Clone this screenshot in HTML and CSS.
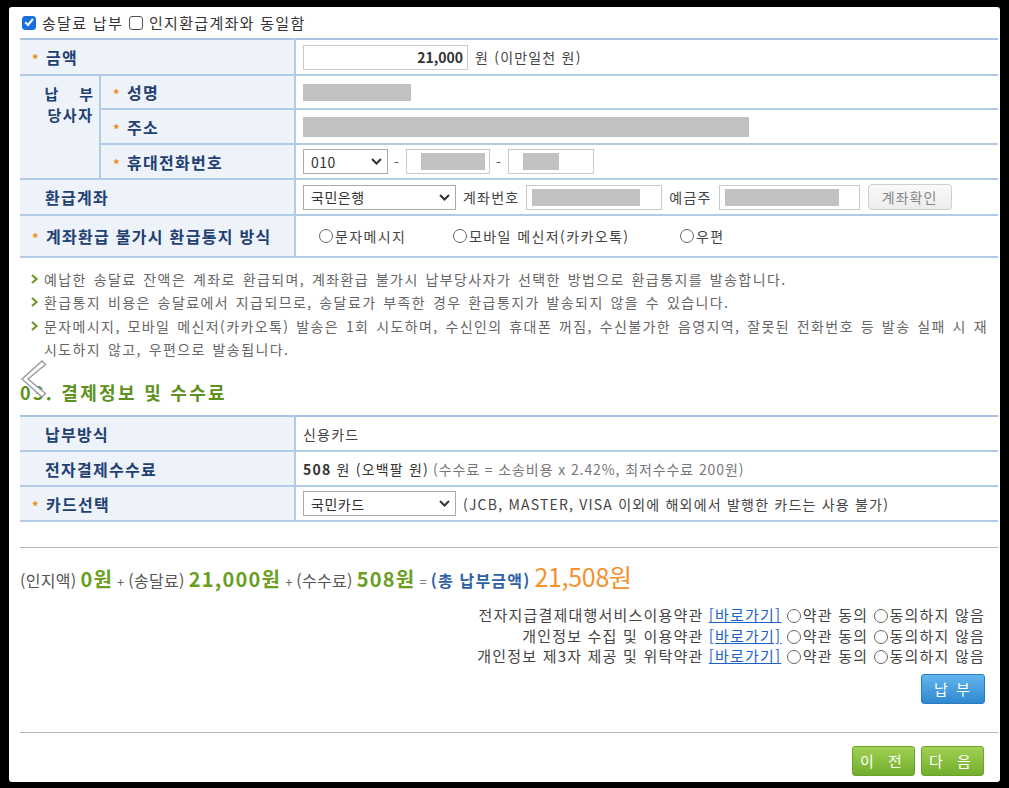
FILE: index.html
```html
<!DOCTYPE html>
<html lang="ko">
<head>
    <meta charset="utf-8">
    <title>송달료 납부</title>
    <link rel="stylesheet" href="styles.css">
</head>
<body>
    <div class="panel">
        <div class="opts">
            <span class="chk on"><svg width="14" height="14" viewBox="0 0 14 14"><path d="M3.2 7.2 L6 10 L11 4" fill="none" stroke="#fff" stroke-width="2"/></svg></span>
            <span>송달료 납부</span>
            <span class="chk"></span>
            <span>인지환급계좌와 동일함</span>
        </div>

        <table class="form-table">
            <colgroup><col class="c1"><col class="c2"><col></colgroup>
            <tr class="h36">
                <th colspan="2" class="req">금액</th>
                <td><div class="val"><span class="inp amt">21,000</span><span>원 (이만일천 원)</span></div></td>
            </tr>
            <tr class="h34">
                <th rowspan="3" class="party"><div class="party-top"><span>납</span><span>부</span></div><div>당사자</div></th>
                <th class="req sub">성명</th>
                <td><div class="val"><span class="mask m-name"></span></div></td>
            </tr>
            <tr class="h35">
                <th class="req sub">주소</th>
                <td><div class="val"><span class="mask m-addr"></span></div></td>
            </tr>
            <tr class="h35">
                <th class="req sub">휴대전화번호</th>
                <td>
                    <div class="val phone">
                        <span class="sel s-phone">010<svg width="11" height="7" viewBox="0 0 11 7"><path d="M1 1 L5.5 5.5 L10 1" fill="none" stroke="#333" stroke-width="2"/></svg></span>
                        <span class="dash">-</span>
                        <span class="inp i-ph1"><span class="mask m-ph1"></span></span>
                        <span class="dash">-</span>
                        <span class="inp i-ph2"><span class="mask m-ph2"></span></span>
                    </div>
                </td>
            </tr>
            <tr class="h36">
                <th colspan="2">환급계좌</th>
                <td>
                    <div class="val">
                        <span class="sel s-bank">국민은행<svg width="11" height="7" viewBox="0 0 11 7"><path d="M1 1 L5.5 5.5 L10 1" fill="none" stroke="#333" stroke-width="2"/></svg></span>
                        <span>계좌번호</span>
                        <span class="inp i-acc"><span class="mask m-acc"></span></span>
                        <span>예금주</span>
                        <span class="inp i-own"><span class="mask m-own"></span></span>
                        <span class="btn-gray">계좌확인</span>
                    </div>
                </td>
            </tr>
            <tr class="h42">
                <th colspan="2" class="req">계좌환급 불가시 환급통지 방식</th>
                <td>
                    <div class="val radios">
                        <span class="ropt o1"><span class="radio"></span>문자메시지</span>
                        <span class="ropt o2"><span class="radio"></span>모바일 메신저(카카오톡)</span>
                        <span class="ropt"><span class="radio"></span>우편</span>
                    </div>
                </td>
            </tr>
        </table>

        <ul class="notes">
            <li><span class="arr"><svg width="7" height="10" viewBox="0 0 7 10"><path d="M1 1 L5.5 5 L1 9" fill="none" stroke="#6f9b2c" stroke-width="2.2"/></svg></span><span>예납한 송달료 잔액은 계좌로 환급되며, 계좌환급 불가시 납부당사자가 선택한 방법으로 환급통지를 발송합니다.</span></li>
            <li><span class="arr"><svg width="7" height="10" viewBox="0 0 7 10"><path d="M1 1 L5.5 5 L1 9" fill="none" stroke="#6f9b2c" stroke-width="2.2"/></svg></span><span>환급통지 비용은 송달료에서 지급되므로, 송달료가 부족한 경우 환급통지가 발송되지 않을 수 있습니다.</span></li>
            <li><span class="arr"><svg width="7" height="10" viewBox="0 0 7 10"><path d="M1 1 L5.5 5 L1 9" fill="none" stroke="#6f9b2c" stroke-width="2.2"/></svg></span><span>문자메시지, 모바일 메신저(카카오톡) 발송은 1회 시도하며, 수신인의 휴대폰 꺼짐, 수신불가한 음영지역, 잘못된 전화번호 등 발송 실패 시 재<br>시도하지 않고, 우편으로 발송됩니다.</span></li>
        </ul>

        <h3 class="sec-title">03. 결제정보 및 수수료</h3>

        <table class="form-table pay">
            <colgroup><col class="c1"><col class="c2"><col></colgroup>
            <tr class="h35">
                <th colspan="2">납부방식</th>
                <td><div class="val">신용카드</div></td>
            </tr>
            <tr class="h35">
                <th colspan="2">전자결제수수료</th>
                <td><div class="val"><span class="fee"><b>508</b> 원 (오백팔 원)</span><span class="hint">(수수료 = 소송비용 x 2.42%, 최저수수료 200원)</span></div></td>
            </tr>
            <tr class="h35">
                <th colspan="2" class="req">카드선택</th>
                <td>
                    <div class="val">
                        <span class="sel s-bank">국민카드<svg width="11" height="7" viewBox="0 0 11 7"><path d="M1 1 L5.5 5.5 L10 1" fill="none" stroke="#333" stroke-width="2"/></svg></span>
                        <span>(JCB, MASTER, VISA 이외에 해외에서 발행한 카드는 사용 불가)</span>
                    </div>
                </td>
            </tr>
        </table>

        <hr class="line first">

        <div class="total">
            <span class="t-lbl">(인지액)</span>
            <b class="t-val">0원</b>
            <span class="t-op">+</span>
            <span class="t-lbl">(송달료)</span>
            <b class="t-val">21,000원</b><span class="t-op">+</span>
            <span class="t-lbl">(수수료)</span>
            <b class="t-val">508원</b>
            <span class="t-op">=</span>
            <b class="t-sum">(총 납부금액)</b>
            <span class="t-total">21,508원</span>
        </div>

        <div class="terms">
            <div>전자지급결제대행서비스이용약관 <a href="#">[바로가기]</a> <span class="radio"></span>약관 동의 <span class="radio"></span>동의하지 않음</div>
            <div>개인정보 수집 및 이용약관 <a href="#">[바로가기]</a> <span class="radio"></span>약관 동의 <span class="radio"></span>동의하지 않음</div>
            <div>개인정보 제3자 제공 및 위탁약관 <a href="#">[바로가기]</a> <span class="radio"></span>약관 동의 <span class="radio"></span>동의하지 않음</div>
        </div>

        <div class="pay-row"><span class="btn-blue">납 부</span></div>

        <hr class="line second">

        <div class="nav">
            <span class="btn-green">이 전</span>
            <span class="btn-green">다 음</span>
        </div>

        <svg class="prev" width="30" height="40" viewBox="0 0 30 40"><polygon points="24,2 27.5,5.5 10,20 27.5,34.5 24,38 4,20" fill="#fff" stroke="#9a9a9a" stroke-width="1.4"/></svg>
    </div>
</body>
</html>
```

FILE: styles.css
```css
* { margin: 0; padding: 0; box-sizing: border-box; }
body {
    background: #000;
    font-family: "Noto Sans CJK KR", "Noto Sans", sans-serif;
    font-size: 14px; color: #444;
}
.panel {
    position: relative; height: 775px;
    margin: 7px 9px 6px 9px; padding: 0 2px 0 11px;
    background: #fff; border-radius: 3px;
}

/* top checkboxes */
.opts {
    display: flex; align-items: center; gap: 6px;
    height: 31px; padding-left: 2px;
    font-size: 15px; color: #333; letter-spacing: 1.3px;
}
.chk {
    display: inline-block; width: 14px; height: 14px;
    border: 1.5px solid #555; border-radius: 3px; background: #fff;
}
.chk.on { background: #1a6fe0; border-color: #1a6fe0; }
.chk svg { display: block; margin: -1.5px; }

/* form tables */
.form-table { width: 100%; border-collapse: collapse; border-top: 2px solid #a8c2e3; }
.form-table .c1 { width: 80px; }
.form-table .c2 { width: 195px; }
.form-table th, .form-table td { border-bottom: 2px solid #b4cbe8; }
.form-table th {
    background: #eef3fa; color: #223f73;
    font-size: 16px; font-weight: bold; letter-spacing: 1.3px;
    text-align: left; padding-left: 25px;
    border-right: 2px solid #b4cbe8;
}
.form-table th.req { padding-left: 12px; }
.form-table th.req::before { content: "*"; color: #f08a1c; margin-right: 6px; font-size: 13px; }
.form-table th.party {
    vertical-align: top; text-align: center;
    padding: 7px 0 0 22px; line-height: 21px;
    font-size: 15px; letter-spacing: 1.5px;
}
.party-top { display: flex; justify-content: space-between; width: 52px; margin: 0 auto; padding-right: 2px; }
.form-table td { padding-left: 7px; }
.h34 th, .h34 td { height: 34px; }
.h35 th, .h35 td { height: 35px; }
.h36 th, .h36 td { height: 36px; }
.h42 th, .h42 td { height: 42px; }

.val { display: flex; align-items: center; gap: 7px; letter-spacing: 1.2px; color: #444; }
.val.phone { gap: 6px; }
.inp {
    display: inline-block; height: 25px;
    border: 1px solid #c9c9c9; background: #fff;
}
.inp.amt {
    width: 165px; text-align: right; padding-right: 4px;
    font-weight: bold; color: #333; line-height: 23px; letter-spacing: 0;
}
.mask { display: block; height: 17px; background: #c2c2c2; }
.m-name { width: 108px; }
.m-addr { width: 446px; height: 20px; }
.inp .mask { margin: 3px 0 0 14px; }
.i-ph1 { width: 84px; }
.m-ph1 { width: 64px; }
.i-ph2 { width: 86px; }
.m-ph2 { width: 36px; }
.i-acc { width: 136px; }
.i-acc .mask { margin-left: 5px; width: 108px; }
.i-own { width: 141px; }
.i-own .mask { margin-left: 5px; width: 114px; }
.dash { color: #555; }
.sel {
    display: inline-flex; align-items: center; justify-content: space-between;
    height: 25px; padding: 0 5px 0 7px;
    border: 1px solid #ababab; background: #fff; color: #333; letter-spacing: .5px;
}
.s-phone { width: 85px; }
.s-bank { width: 153px; }
.btn-gray {
    display: inline-block; width: 84px; height: 26px; margin-left: 1px;
    line-height: 24px; text-align: center; color: #888; letter-spacing: 1px;
    border: 1px solid #cfcfcf; border-radius: 4px;
    background: linear-gradient(#fafafa, #ececec);
}
.radios { gap: 0; padding-left: 16px; letter-spacing: 1.4px; }
.ropt { display: inline-flex; align-items: center; }
.ropt.o1 { width: 134px; }
.ropt.o2 { width: 227px; }
.radio {
    display: inline-block; width: 14px; height: 14px; margin-right: 2px;
    border: 1px solid #666; border-radius: 50%; background: #fff;
    vertical-align: -2px;
}

/* notes */
.notes {
    list-style: none; margin-top: 10px; padding-left: 11px;
    color: #666; line-height: 23.3px; letter-spacing: 1.4px; word-spacing: 1.5px;
}
.notes li { display: flex; }
.notes li span:last-child { white-space: nowrap; }
.notes .arr { flex: none; width: 13px; padding-top: 6px; }
.notes .arr svg { display: block; }

.sec-title {
    margin-top: 19px; line-height: 24px;
    font-size: 18px; font-weight: bold; color: #5e911d; letter-spacing: 2.3px;
}
.form-table.pay { margin-top: 11px; }
.fee { color: #333; }
.hint { color: #777; margin-left: -3px; letter-spacing: .9px; }

.line { border: none; border-top: 1px solid #b3b3b3; }
.line.first { margin-top: 25px; }
.line.second { margin-top: 28px; }

/* total */
.total {
    display: flex; align-items: baseline; gap: 4px;
    margin-top: 13px; height: 30px; line-height: 30px;
}
.t-lbl { color: #555; font-size: 16px; letter-spacing: .3px; }
.t-op { color: #666; font-size: 13px; }
.t-val { color: #6a9f1f; font-size: 20px; font-weight: bold; letter-spacing: 1.2px; }
.t-sum { color: #2d5fa8; font-size: 16px; letter-spacing: 1.2px; }
.t-total { color: #f3922f; font-size: 25px; letter-spacing: -.3px; }

/* terms */
.terms {
    margin-top: 14px; padding-right: 13px;
    text-align: right; line-height: 20.5px; color: #444;
    font-size: 15px; letter-spacing: 1.2px;
}
.terms a { color: #1d63c4; }
.pay-row { display: flex; justify-content: flex-end; padding-right: 13px; margin-top: 7px; }
.btn-blue, .btn-green {
    display: inline-block; height: 30px; line-height: 28px; text-align: center;
    color: #fff; font-size: 15px; border-radius: 3px; letter-spacing: 2px;
}
.btn-blue {
    width: 64px; border: 1px solid #2c7cc0;
    background: linear-gradient(#63b5ee, #2f88d0);
}
.nav { display: flex; justify-content: flex-end; gap: 6px; padding-right: 14px; margin-top: 13px; }
.btn-green {
    width: 63px; border: 1px solid #6aa42b;
    background: linear-gradient(#a0d153, #73ad2d);
    letter-spacing: 5px;
}
.prev { position: absolute; left: 9px; top: 352px; }
```
